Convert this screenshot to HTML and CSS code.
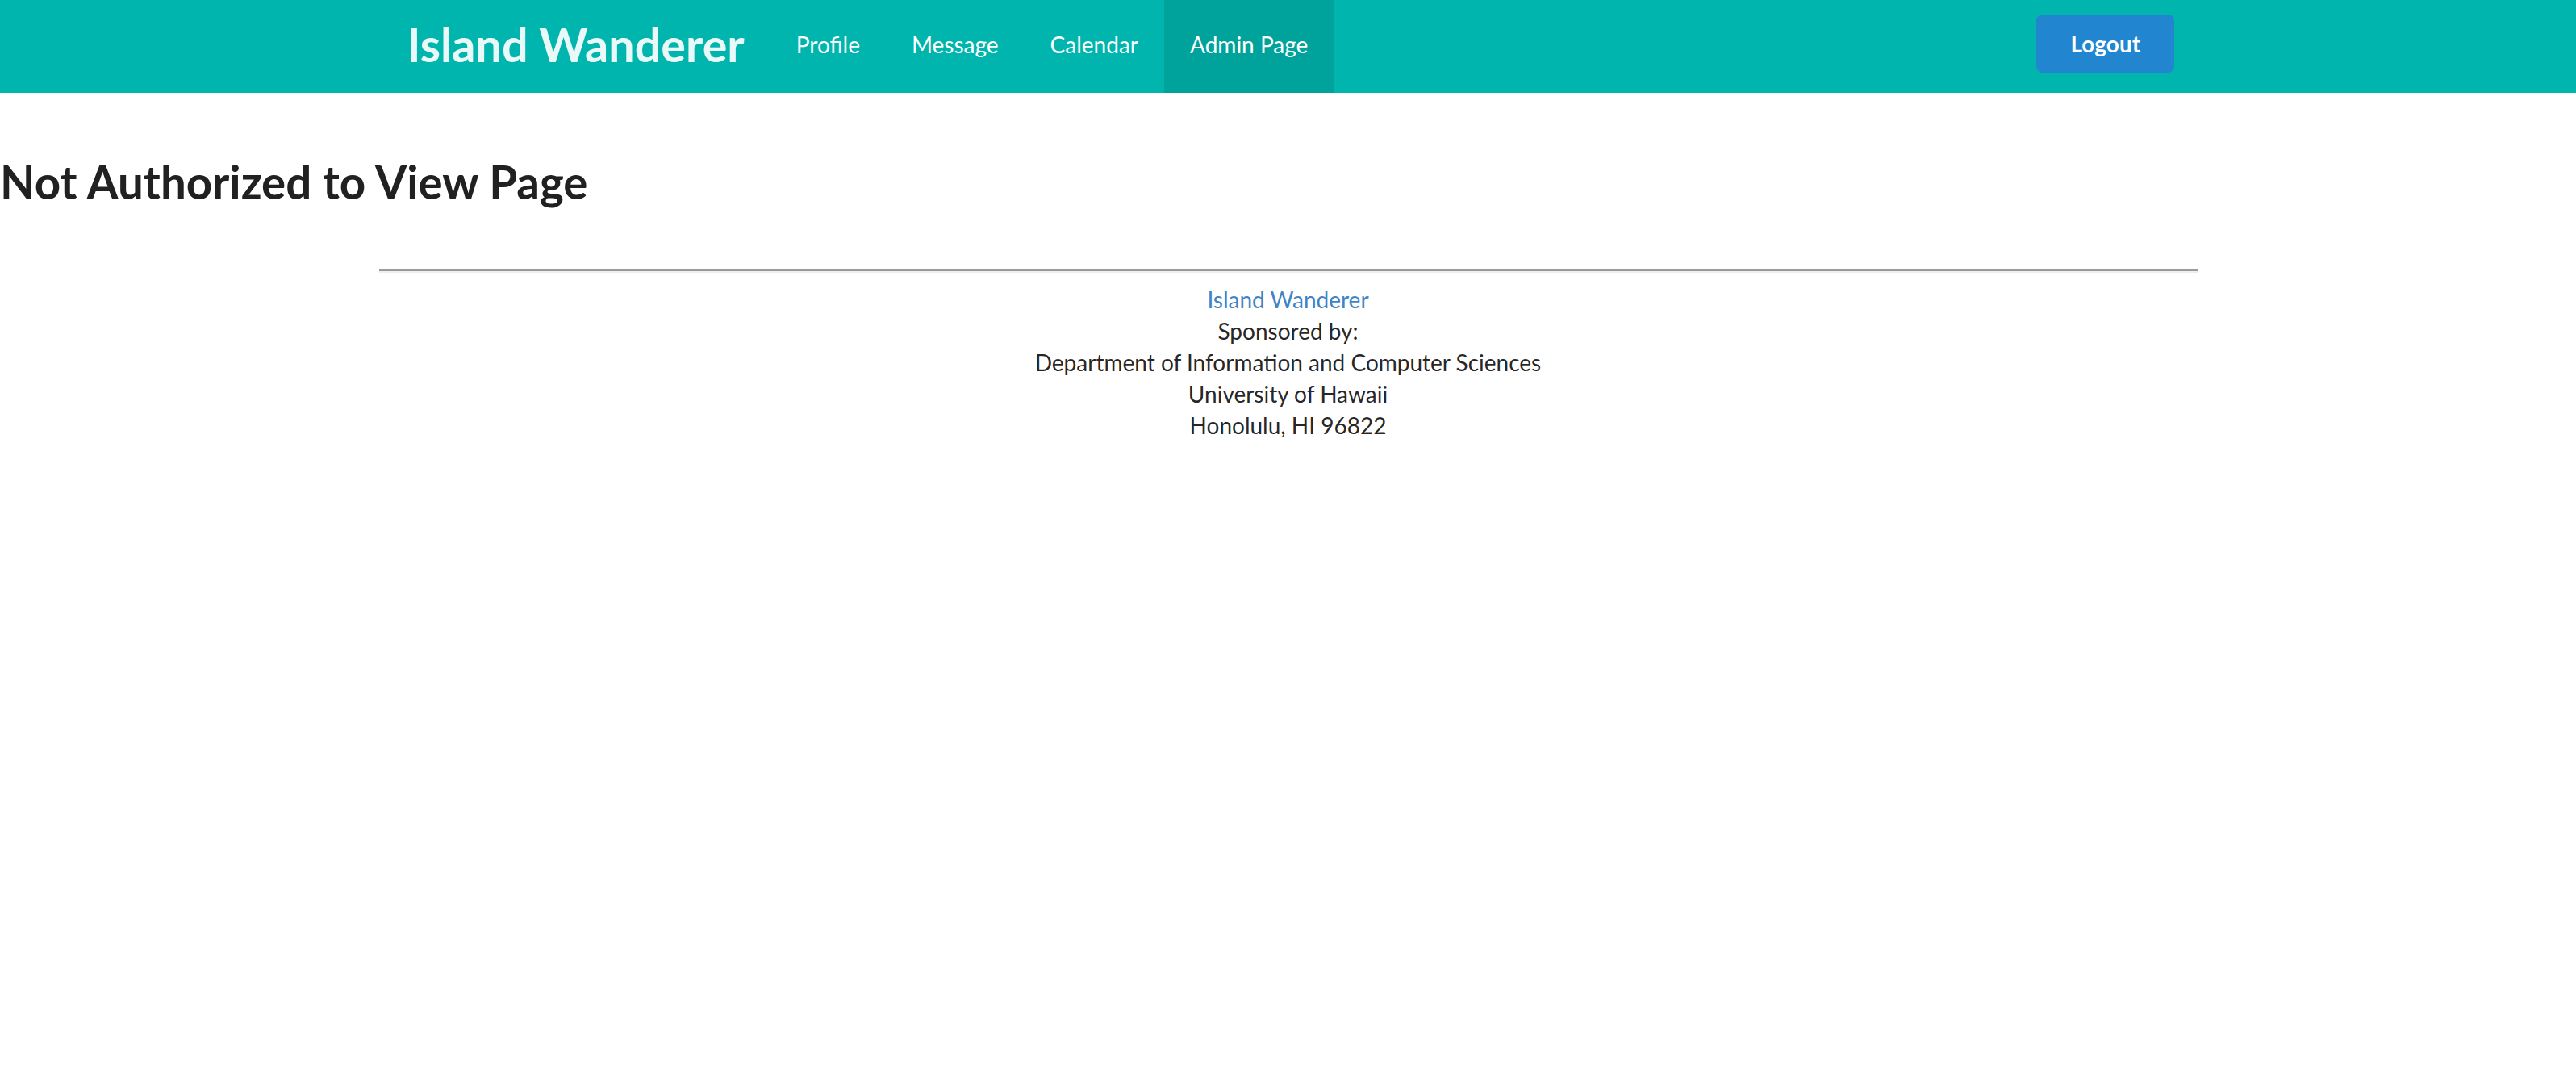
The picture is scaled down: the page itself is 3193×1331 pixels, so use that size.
FILE: index.html
```html
<!DOCTYPE html>
<html lang="en">
<head>
<meta charset="utf-8">
<title>Island Wanderer</title>
<link rel="stylesheet" href="styles.css">
</head>
<body>
<nav class="navbar">
  <div class="container nav-inner">
    <a class="brand" href="#">Island Wanderer</a>
    <a class="nav-item" href="#">Profile</a>
    <a class="nav-item" href="#">Message</a>
    <a class="nav-item" href="#">Calendar</a>
    <a class="nav-item active" href="#">Admin Page</a>
    <div class="nav-right">
      <button class="logout" type="button">Logout</button>
    </div>
  </div>
</nav>
<main>
  <h2 class="page-title">Not Authorized to View Page</h2>
</main>
<footer class="container footer">
  <hr class="rule">
  <div class="footer-text">
    <a class="footer-link" href="#">Island Wanderer</a><br>
    Sponsored by:<br>
    Department of Information and Computer Sciences<br>
    University of Hawaii<br>
    Honolulu, HI 96822
  </div>
</footer>
</body>
</html>
```

FILE: styles.css
```css
html, body {
  margin: 0;
  padding: 0;
  background: #ffffff;
}
body {
  font-family: Lato, "Open Sans", "Liberation Sans", sans-serif;
  font-size: 28px;
  line-height: 39px;
  color: rgba(0, 0, 0, 0.87);
}
.container {
  width: 2254px;
  margin: 0 auto;
}
.navbar {
  background: #00b5ad;
  height: 115px;
}
.nav-inner {
  display: flex;
  align-items: stretch;
  height: 115px;
}
.brand {
  display: flex;
  align-items: center;
  padding: 0 32px 6px 35px;
  font-size: 57.5px;
  font-weight: 700;
  color: #e9f9f8;
  text-decoration: none;
  line-height: 1;
}
.nav-item {
  display: flex;
  align-items: center;
  padding: 0 32px 4px 32px;
  color: #ffffff;
  text-decoration: none;
  font-size: 28px;
}
.nav-item.active {
  background: #00a39c;
}
.nav-right {
  margin-left: auto;
  display: flex;
  align-items: flex-start;
  padding: 18px 29px 0 0;
}
.logout {
  font-family: Lato, "Open Sans", "Liberation Sans", sans-serif;
  font-weight: 700;
  font-size: 28px;
  line-height: 28px;
  color: #ffffff;
  background: #2185d0;
  border: none;
  border-radius: 8px;
  padding: 22px 43px;
  width: 171px;
  height: 72px;
}
.page-title {
  margin: 74px 0 0 0;
  font-size: 56.5px;
  line-height: 72px;
  font-weight: 700;
  color: #212121;
}
.footer {
  padding-top: 72px;
}
.rule {
  margin: 0;
  height: 0;
  border: none;
  border-top: 3px solid #9a9a9a;
  border-bottom: 2px solid #eeeeee;
}
.footer-text {
  text-align: center;
  padding-top: 14px;
}
.footer-link {
  color: #4183c4;
  text-decoration: none;
}
```
